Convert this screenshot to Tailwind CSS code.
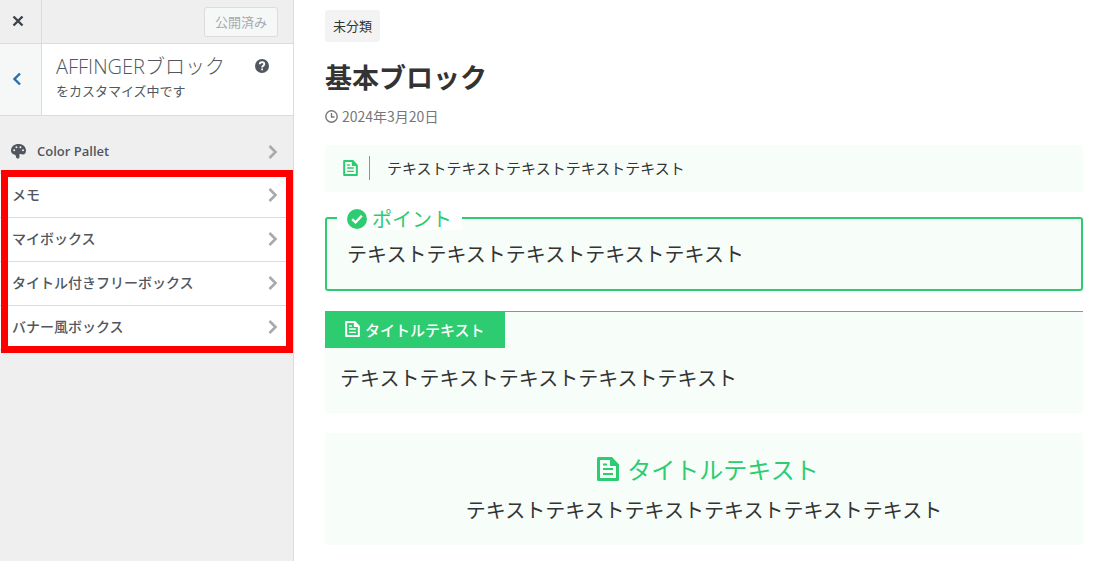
<!DOCTYPE html>
<html lang="ja">
<head>
<meta charset="utf-8">
<meta name="viewport" content="width=device-width, initial-scale=1">
<title>AFFINGERブロック</title>
<script src="https://cdn.jsdelivr.net/npm/@tailwindcss/browser@4"></script>
</head>
<body class="flex min-h-screen bg-white font-['Noto_Sans_CJK_JP',sans-serif] text-[#333]">
<svg class="hidden" aria-hidden="true">
  <symbol id="doc" viewBox="0 0 22 24">
    <path fill="currentColor" fill-rule="evenodd" d="M1.500 0H15L22 7.500V22.500Q22 24 20.500 24H1.500Q0 24 0 22.500V1.500Q0 0 1.500 0ZM3 3V21H19V9H13V3ZM6 6.500H10V8.500H6ZM6 11H16V13H6ZM6 16H16V18H6Z"/>
  </symbol>
  <symbol id="chev" viewBox="0 0 10 14">
    <path fill="none" stroke="currentColor" stroke-width="2.600" d="M1.500 1L7.500 7L1.500 13"/>
  </symbol>
</svg>

<aside class="w-[294px] shrink-0 border-r border-[#dcdcde] bg-[#efefef] font-['Open_Sans','Noto_Sans_CJK_JP',sans-serif] text-[#50575e]">
  <header class="flex h-11 border-b border-[#dcdcde]">
    <button type="button" aria-label="閉じる" class="flex w-[42px] items-center border-r border-[#dcdcde] pb-0.5 pl-3 text-[#3c434a]">
      <svg class="size-3" viewBox="0 0 12 12" fill="none" stroke="currentColor" stroke-width="2.400"><path d="M1.500 1.500L10.500 10.500M10.500 1.500L1.500 10.500"/></svg>
    </button>
    <div class="flex flex-1 items-center justify-end pr-[15px]">
      <button type="button" disabled class="h-[30px] rounded-[3px] border border-[#dcdcde] bg-[#f6f7f7] px-2.5 text-[13px] leading-7 text-[#a7aaad]">公開済み</button>
    </div>
  </header>
  <div class="flex h-[72px] border-b border-[#dcdcde] bg-white">
    <button type="button" aria-label="戻る" class="flex w-[42px] items-center border-r border-[#dcdcde] bg-[#f6f7f7] pb-0.5 pl-3 text-[#2271b1]">
      <svg class="h-3.5 w-2.5" viewBox="0 0 10 14" fill="none" stroke="currentColor" stroke-width="2.400"><path d="M8 1.500L2.500 7L8 12.500"/></svg>
    </button>
    <div class="flex flex-1 items-start justify-between pt-[9px] pr-6 pl-3.5">
      <h2 class="font-light">
        <span class="block text-xl leading-7">AFFINGERブロック</span>
        <span class="block text-[13px] leading-5 font-normal">をカスタマイズ中です</span>
      </h2>
      <button type="button" aria-label="ヘルプ" class="mt-1.5">
        <svg class="size-3.5" viewBox="0 0 14 14"><circle cx="7" cy="7" r="7" fill="#50575e"/><path d="M4.700 5.300Q4.800 3.200 7 3.200Q9.300 3.300 9.300 5.100Q9.300 6.200 8.100 6.900Q7.100 7.400 7.100 8.600M7.100 9.500V11.200" fill="none" stroke="#fff" stroke-width="1.800"/></svg>
      </button>
    </div>
  </div>
  <nav class="pt-3.5 text-sm font-medium">
    <a href="#palette" class="flex h-11 items-center border-b border-[#dcdcde] pr-[15px] pl-[11px] text-[13px] font-semibold">
      <svg class="mr-[11px] size-[15px]" viewBox="0 0 15 15"><path fill="currentColor" fill-rule="evenodd" d="M7.500 0C11.800 0 15 2.700 15 6.500C15 9 13.700 10.500 12 10.500C10.800 10.500 10 9.800 9 10C7.800 10.300 8.700 11.700 8.500 13C8.300 14.400 7 15 5.800 14.300C4.500 13.500 5.300 12 4.300 11C3.200 10.500 0 10 0 6.500C0 2.700 3.300 0 7.500 0ZM3.200 5.200A1 1 0 1 0 3.200 7.200A1 1 0 1 0 3.200 5.200ZM5.400 2.300A1 1 0 1 0 5.400 4.300A1 1 0 1 0 5.400 2.300ZM9.400 2.300A1 1 0 1 0 9.400 4.300A1 1 0 1 0 9.400 2.300ZM12 5.200A1 1 0 1 0 12 7.200A1 1 0 1 0 12 5.200Z"/></svg>
      <span class="flex-1">Color Pallet</span>
      <svg class="h-3.5 w-2.5 text-[#a7aaad]"><use href="#chev"/></svg>
    </a>
    <div class="relative bg-white">
      <a href="#memo" class="flex h-11 items-center justify-between border-b border-[#dcdcde] pr-[15px] pb-0.5 pl-3">メモ<svg class="h-3.5 w-2.5 text-[#a7aaad]"><use href="#chev"/></svg></a>
      <a href="#mybox" class="flex h-11 items-center justify-between border-b border-[#dcdcde] pr-[15px] pb-0.5 pl-3">マイボックス<svg class="h-3.5 w-2.5 text-[#a7aaad]"><use href="#chev"/></svg></a>
      <a href="#freebox" class="flex h-11 items-center justify-between border-b border-[#dcdcde] pr-[15px] pb-0.5 pl-3">タイトル付きフリーボックス<svg class="h-3.5 w-2.5 text-[#a7aaad]"><use href="#chev"/></svg></a>
      <a href="#banner" class="flex h-11 items-center justify-between border-b border-[#dcdcde] pr-[15px] pb-0.5 pl-3">バナー風ボックス<svg class="h-3.5 w-2.5 text-[#a7aaad]"><use href="#chev"/></svg></a>
      <div class="pointer-events-none absolute -top-1 right-0 -bottom-[3px] left-px border-[7px] border-[#f00]"></div>
    </div>
  </nav>
</aside>

<main class="min-w-0 flex-1 pt-2.5 pr-[18px] pl-[31px]">
  <a href="#category" class="block h-8 w-fit rounded-[3px] bg-[#f3f3f3] px-2 text-[13px] leading-8">未分類</a>
  <h1 class="mt-[15px] text-[27px] leading-10 font-bold">基本ブロック</h1>
  <p class="mt-[9px] flex items-center gap-1 text-sm leading-5 text-[#777]">
    <svg class="size-[13px]" viewBox="0 0 13 13" fill="none" stroke="currentColor" stroke-width="1.400"><circle cx="6.500" cy="6.500" r="5.700"/><path d="M6.500 3V7H9.500"/></svg>
    <time datetime="2024-03-20">2024年3月20日</time>
  </p>

  <section id="memo" class="mt-[19px] flex h-[47px] items-center rounded-xs bg-[#f7fdf9] pb-px pl-[18px] text-[15px]">
    <svg class="h-4 w-[15px] text-[#2ecc71]"><use href="#doc"/></svg>
    <p class="ml-[11px] border-l border-[#2ecc71] pl-[17px] leading-6">テキストテキストテキストテキストテキスト</p>
  </section>

  <section id="mybox" class="relative mt-[25px] rounded-[3px] border-2 border-[#2ecc71] bg-[#f7fdf9] px-5 pt-5 pb-5 text-xl">
    <h2 class="absolute -top-3 left-2.5 flex h-[23px] items-center gap-[5px] bg-white px-2.5 leading-6 text-[#2ecc71]">
      <svg class="size-5" viewBox="0 0 20 20"><circle cx="10" cy="10" r="10" fill="currentColor"/><path d="M5.200 10.200L8.600 13.400L14.800 6.800" fill="none" stroke="#fff" stroke-width="2.400"/></svg>
      ポイント
    </h2>
    <p class="leading-[30px]">テキストテキストテキストテキストテキスト</p>
  </section>

  <section id="freebox" class="mt-5 border-t border-[#2ecc71] bg-[#f7fdf9] pb-5 text-xl">
    <h2 class="flex h-9 w-fit items-center gap-[5px] bg-[#2ecc71] px-5 pb-0.5 text-[15px] font-medium text-white">
      <svg class="h-4 w-[15px]"><use href="#doc"/></svg>
      タイトルテキスト
    </h2>
    <p class="px-[15px] pt-[15px] leading-[30px]">テキストテキストテキストテキストテキスト</p>
  </section>

  <section id="banner" class="mt-5 bg-[#f7fdf9] py-5 text-center text-xl">
    <h2 class="flex items-center justify-center gap-2 pl-2 text-2xl leading-8 text-[#2ecc71]">
      <svg class="h-6 w-[22px]"><use href="#doc"/></svg>
      タイトルテキスト
    </h2>
    <p class="mt-2.5 leading-[30px]">テキストテキストテキストテキストテキストテキスト</p>
  </section>
</main>
</body>
</html>
